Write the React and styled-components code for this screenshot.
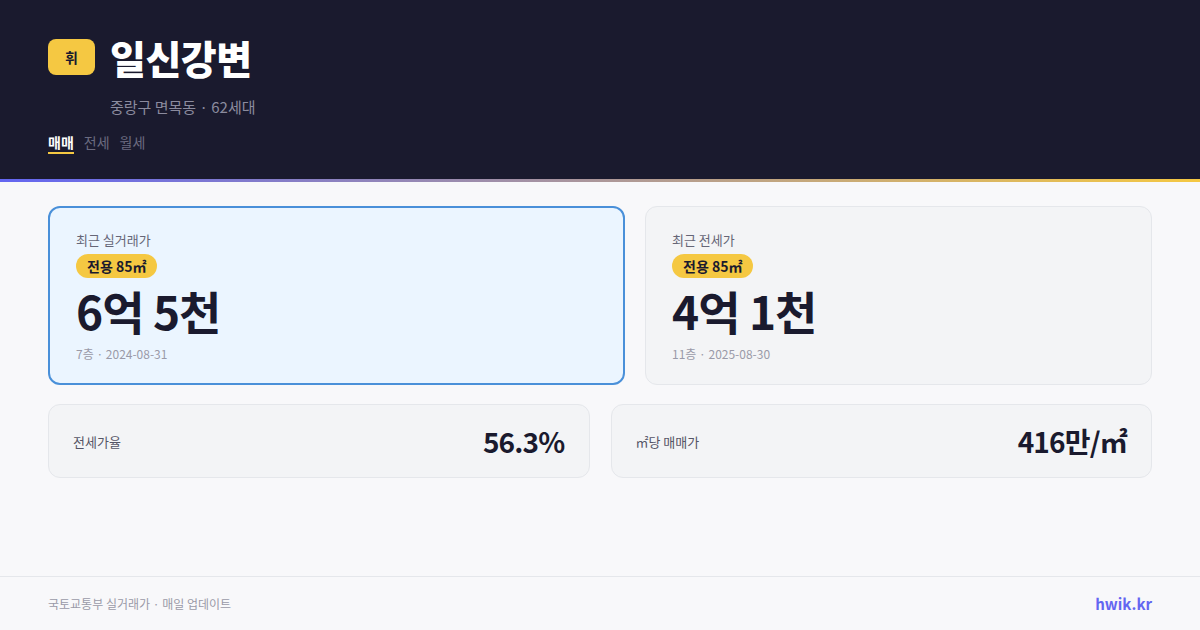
import React from "react";
import styled, { createGlobalStyle } from "styled-components";

const Global = createGlobalStyle`
  * { box-sizing: border-box; }
  html, body { margin: 0; padding: 0; }
  body {
    width: 1200px;
    height: 630px;
    overflow: hidden;
    background: #f8f8fa;
    font-family: "Noto Sans CJK KR", "Noto Sans", sans-serif;
    color: #1a1a2e;
  }
`;

const Page = styled.div`
  width: 1200px;
  height: 630px;
  display: flex;
  flex-direction: column;
  background: #f8f8fa;
`;

const Header = styled.header`
  background: #1a1a2e;
  padding: 39px 48px 25px;
  border-bottom: 3px solid transparent;
  border-image: linear-gradient(90deg, #6366f1 0%, #f5c842 100%) 1;
`;

const TitleRow = styled.div`
  display: flex;
  align-items: center;
  gap: 15px;
  height: 36px;
`;

const Logo = styled.div`
  width: 47px;
  height: 36px;
  border-radius: 8px;
  background: #f5c842;
  color: #1a1a2e;
  font-size: 14px;
  font-weight: 700;
  display: flex;
  align-items: center;
  justify-content: center;
`;

const Title = styled.h1`
  margin: 0;
  font-size: 39px;
  font-weight: 900;
  letter-spacing: -0.5px;
  line-height: 36px;
  color: #ffffff;
`;

const Subtitle = styled.div`
  margin: 21px 0 0 62px;
  font-size: 15px;
  line-height: 21px;
  color: #8b8b9e;
`;

const Tabs = styled.nav`
  display: flex;
  gap: 10px;
  margin-top: 15px;
`;

const Tab = styled.span`
  font-size: 14px;
  line-height: 20px;
  font-weight: ${(p) => (p.$active ? 700 : 400)};
  color: ${(p) => (p.$active ? "#ffffff" : "#6b6b80")};
  border-bottom: 2px solid ${(p) => (p.$active ? "#f5c842" : "transparent")};
`;

const Main = styled.main`
  flex: 1;
  padding: 24px 48px;
  display: flex;
  flex-direction: column;
  gap: 19px;
`;

const TopRow = styled.div`
  display: grid;
  grid-template-columns: 577fr 507fr;
  gap: 20px;
`;

const PriceCard = styled.section`
  border-radius: 12px;
  border: ${(p) => (p.$highlight ? "2px solid #4a90d9" : "1px solid #e5e7eb")};
  background: ${(p) => (p.$highlight ? "#ebf5ff" : "#f3f4f6")};
  padding: ${(p) => (p.$highlight ? "22px 26px 20px" : "23px 26px 21px")};
  display: flex;
  flex-direction: column;
  align-items: flex-start;
`;

const CardLabel = styled.div`
  font-size: 13px;
  line-height: 20px;
  color: #666677;
`;

const AreaBadge = styled.span`
  margin-top: 4px;
  height: 24px;
  padding: 0 11px;
  border-radius: 12px;
  background: #f5c842;
  color: #1a1a2e;
  font-size: 14px;
  font-weight: 700;
  line-height: 24px;
`;

const BigPrice = styled.div`
  margin-top: 3px;
  font-size: 46px;
  font-weight: 700;
  letter-spacing: -1px;
  line-height: 58px;
  color: #1a1a2e;
`;

const Meta = styled.div`
  margin-top: 6px;
  font-size: 12px;
  line-height: 18px;
  color: #9a9aa8;
`;

const BottomRow = styled.div`
  display: grid;
  grid-template-columns: 1fr 1fr;
  gap: 21px;
`;

const StatCard = styled.section`
  height: 74px;
  border-radius: 12px;
  border: 1px solid #e5e7eb;
  background: #f3f4f6;
  padding: 0 24px;
  display: flex;
  align-items: center;
  justify-content: space-between;
`;

const StatLabel = styled.span`
  font-size: 13px;
  color: #555566;
`;

const StatValue = styled.span`
  font-size: 28px;
  font-weight: 700;
  letter-spacing: -0.8px;
  color: #1a1a2e;
`;

const Footer = styled.footer`
  height: 54px;
  border-top: 1px solid #e5e7eb;
  padding: 0 48px;
  display: flex;
  align-items: center;
  justify-content: space-between;
`;

const Source = styled.span`
  font-size: 12px;
  color: #9a9aa8;
`;

const Brand = styled.span`
  font-size: 15px;
  font-weight: 700;
  color: #6366f1;
`;

export default function App() {
  return (
    <>
      <Global />
      <Page>
        <Header>
          <TitleRow>
            <Logo>휘</Logo>
            <Title>일신강변</Title>
          </TitleRow>
          <Subtitle>중랑구 면목동 · 62세대</Subtitle>
          <Tabs>
            <Tab $active>매매</Tab>
            <Tab>전세</Tab>
            <Tab>월세</Tab>
          </Tabs>
        </Header>
        <Main>
          <TopRow>
            <PriceCard $highlight>
              <CardLabel>최근 실거래가</CardLabel>
              <AreaBadge>전용 85㎡</AreaBadge>
              <BigPrice>6억 5천</BigPrice>
              <Meta>7층 · 2024-08-31</Meta>
            </PriceCard>
            <PriceCard>
              <CardLabel>최근 전세가</CardLabel>
              <AreaBadge>전용 85㎡</AreaBadge>
              <BigPrice>4억 1천</BigPrice>
              <Meta>11층 · 2025-08-30</Meta>
            </PriceCard>
          </TopRow>
          <BottomRow>
            <StatCard>
              <StatLabel>전세가율</StatLabel>
              <StatValue>56.3%</StatValue>
            </StatCard>
            <StatCard>
              <StatLabel>㎡당 매매가</StatLabel>
              <StatValue>416만/㎡</StatValue>
            </StatCard>
          </BottomRow>
        </Main>
        <Footer>
          <Source>국토교통부 실거래가 · 매일 업데이트</Source>
          <Brand>hwik.kr</Brand>
        </Footer>
      </Page>
    </>
  );
}
